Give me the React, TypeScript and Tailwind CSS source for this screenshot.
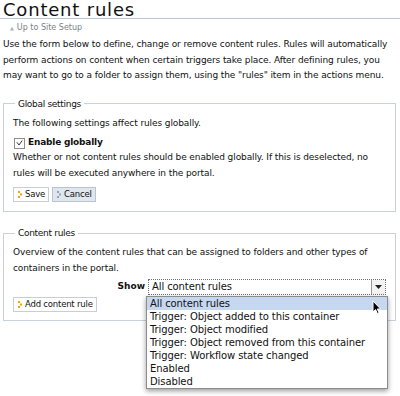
import React from 'react';

const Dots = ({ color }: { color: string }) => (
  <svg width="4" height="7" viewBox="0 0 4 7" className="shrink-0">
    <rect x="0" y="0" width="2" height="2" fill={color} />
    <rect x="2" y="2.5" width="2" height="2" fill={color} />
    <rect x="0" y="5" width="2" height="2" fill={color} />
  </svg>
);

const Button: React.FC<{ label: string; cancel?: boolean }> = ({ label, cancel }) => (
  <button
    className={
      'h-[15px] flex items-center gap-[3px] pl-[4px] pr-[3px] border text-[8.5px] leading-[13px] tracking-[-0.2px] ' +
      (cancel ? 'bg-[#dfe6ee] border-[#b9c4cf]' : 'bg-white border-[#c7ced6]')
    }
  >
    <Dots color={cancel ? '#8ea3b8' : '#f0a30a'} />
    {label}
  </button>
);

const options = [
  'All content rules',
  'Trigger: Object added to this container',
  'Trigger: Object modified',
  'Trigger: Object removed from this container',
  'Trigger: Workflow state changed',
  'Enabled',
  'Disabled',
];

const App: React.FC = () => {
  return (
    <div className="w-[400px] h-[396px] overflow-hidden bg-white text-[#111] font-['DejaVu_Sans',sans-serif]">
      <div className="h-[19px] border-b border-[#b7c7d6]">
        <h1 className="pl-[3px] pt-[1px] text-[18px] leading-[17px] tracking-[0.8px] font-normal whitespace-nowrap">
          Content rules
        </h1>
      </div>
      <div className="pl-[10px] pt-[3px] h-[15px] flex items-center gap-[3px] text-[8px] leading-[12px] text-[#7a7f85]">
        <span className="text-[5px] text-[#a9b2bb]">▲</span>
        Up to Site Setup
      </div>

      <p className="mt-[3px] px-[3px] text-[9px] leading-[15.5px] tracking-[-0.1px] whitespace-nowrap">
        <span className="block">Use the form below to define, change or remove content rules. Rules will automatically</span>
        <span className="block">perform actions on content when certain triggers take place. After defining rules, you</span>
        <span className="block">may want to go to a folder to assign them, using the "rules" item in the actions menu.</span>
      </p>

      <fieldset className="mt-[14px] ml-[3px] mr-[4px] border border-[#c9d2db] px-[9px] pb-[9px] text-[9px] tracking-[-0.1px]">
        <legend className="ml-[2px] px-[3px] leading-[12px] tracking-[-0.3px]">Global settings</legend>
        <div className="mt-[6px] leading-[15.5px]">The following settings affect rules globally.</div>
        <div className="mt-[5px] h-[14px] flex items-center gap-[3px] pl-[1px]">
          <span className="w-[11px] h-[11px] border border-[#8d8d8d] bg-white flex items-center justify-center">
            <svg width="7" height="6" viewBox="0 0 7 6">
              <path d="M0.8 2.2 L3 5 L6.2 0.6" fill="none" stroke="#333" strokeWidth="1" />
            </svg>
          </span>
          <span className="font-bold text-[9px] tracking-[-0.2px]">Enable globally</span>
        </div>
        <div className="leading-[15.5px] whitespace-nowrap">
          <span className="block">Whether or not content rules should be enabled globally. If this is deselected, no</span>
          <span className="block">rules will be executed anywhere in the portal.</span>
        </div>
        <div className="mt-[6px] flex gap-[3px]">
          <Button label="Save" />
          <Button label="Cancel" cancel />
        </div>
      </fieldset>

      <fieldset className="mt-[15px] ml-[3px] mr-[4px] border border-[#c9d2db] px-[9px] pb-[8px] text-[9px] tracking-[-0.1px]">
        <legend className="ml-[2px] px-[3px] leading-[12px] tracking-[-0.3px]">Content rules</legend>
        <div className="mt-[6px] leading-[15.5px] whitespace-nowrap">
          <span className="block">Overview of the content rules that can be assigned to folders and other types of</span>
          <span className="block">containers in the portal.</span>
        </div>
        <div className="mt-[3px] h-[16px] flex items-center justify-end gap-[3px]">
          <span className="font-bold text-[9px] tracking-[0px]">Show</span>
          <div className="relative w-[238px] h-[16px]">
            <div className="h-full flex border border-dotted border-[#6f6f6f] bg-white">
              <span className="flex-1 pl-[3px] text-[10px] leading-[14px] tracking-[-0.1px]">All content rules</span>
              <span className="w-[14px] border-l border-[#9a9a9a] bg-[#f3f3f3] flex items-center justify-center">
                <svg width="7" height="4" viewBox="0 0 7 4">
                  <path d="M0 0 H7 L3.5 4 Z" fill="#222" />
                </svg>
              </span>
            </div>
            <div className="absolute left-[-2px] right-[-2px] top-[17px] z-10 border border-[#8c8c8c] bg-white shadow-[0_2px_5px_rgba(0,0,0,0.4)] text-[10px] tracking-[-0.1px]">
              {options.map((o, i) => (
                <div
                  key={o}
                  className={'h-[13px] leading-[13px] pl-[3px] whitespace-nowrap ' + (i === 0 ? 'bg-[#c6d8f0]' : '')}
                >
                  {o}
                </div>
              ))}
              <svg width="10" height="15" viewBox="0 0 10 15" className="absolute left-[225px] top-[3px]">
                <path d="M1 1 V12 L3.6 9.6 L5.4 13.6 L7 12.9 L5.3 9 H8.6 Z" fill="#000" stroke="#fff" strokeWidth="1" />
              </svg>
            </div>
          </div>
        </div>
        <div className="mt-[2px] flex">
          <Button label="Add content rule" />
        </div>
      </fieldset>
    </div>
  );
};

export default App;
